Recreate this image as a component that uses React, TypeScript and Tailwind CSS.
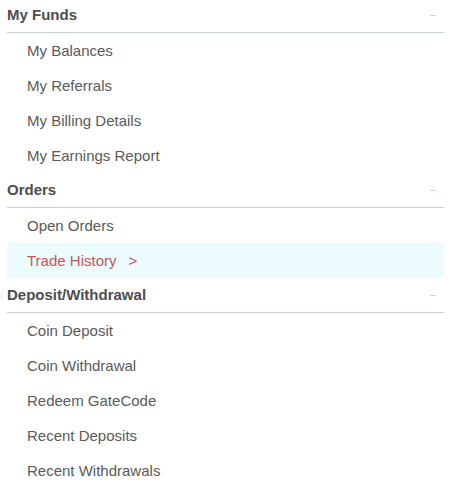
const sections = [
  {
    title: 'My Funds',
    items: ['My Balances', 'My Referrals', 'My Billing Details', 'My Earnings Report'],
  },
  {
    title: 'Orders',
    items: ['Open Orders', 'Trade History'],
  },
  {
    title: 'Deposit/Withdrawal',
    items: ['Coin Deposit', 'Coin Withdrawal', 'Redeem GateCode', 'Recent Deposits', 'Recent Withdrawals'],
  },
];

const active = 'Trade History';

export default function App() {
  return (
    <div className="w-[459px] h-[490px] overflow-hidden bg-white font-['Liberation_Sans',Arial,sans-serif]">
      <div className="ml-[7px] w-[437px] -mt-[2px]">
        {sections.map((s) => (
          <div key={s.title}>
            <div className="flex h-[35px] items-center justify-between border-b border-[#c9d4d8]">
              <span className="text-[15px] font-bold text-[#4d4d4d]">{s.title}</span>
              <span className="mr-[8px] h-px w-[6px] bg-[#d6d6d6]" />
            </div>
            {s.items.map((item) => (
              <div
                key={item}
                className={
                  item === active
                    ? 'flex h-[35px] items-center bg-[#ebfbfe] pl-[20px] pt-px text-[15px] text-[#c9545a]'
                    : 'flex h-[35px] items-center pl-[20px] pt-px text-[15px] text-[#5a5a5a]'
                }
              >
                {item}
                {item === active && <span className="ml-[12px]">&gt;</span>}
              </div>
            ))}
          </div>
        ))}
      </div>
    </div>
  );
}
